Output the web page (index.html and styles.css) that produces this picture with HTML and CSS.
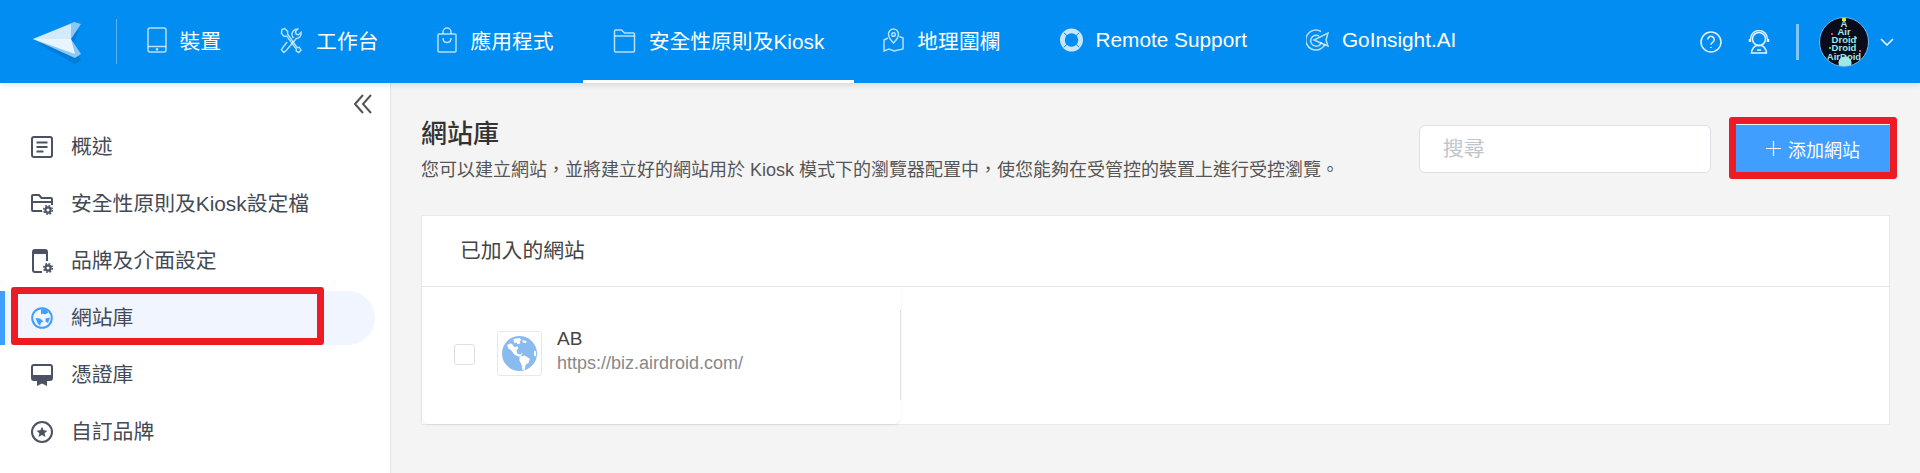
FILE: index.html
```html
<!DOCTYPE html>
<html lang="zh-Hant">
<head>
    <meta charset="UTF-8">
    <meta name="viewport" content="width=device-width, initial-scale=1.0">
    <title>網站庫</title>
    <link rel="stylesheet" href="styles.css">
</head>
<body>
    <header class="topbar">
        <svg class="logo" viewBox="0 0 50 44">
            <polygon points="6,24 46,10 40,24 48,40 42,44" fill="#0468b8" opacity="0.45"/>
            <polygon points="0,19 41,2 48,4 38,19 48,34 42,38" fill="#8cc8f6"/>
            <polygon points="0,19 38,4 38,19" fill="#d3eafb"/>
            <polygon points="0,19 38,19 42,34" fill="#e9f5fe"/>
        </svg>
        <span class="topbar-sep"></span>
        <nav class="tabs">
            <a class="tab">
                <svg class="tab-icon" width="20" height="26" viewBox="0 0 20 26"><rect x="1" y="1" width="18" height="24" rx="2"/><path d="M1 19.500h18"/><circle cx="10" cy="22.300" r="0.600"/></svg>
                <span>裝置</span>
            </a>
            <a class="tab">
                <svg class="tab-icon" width="23" height="27" viewBox="0 0 24 27"><path d="M2 2l3-1 3 3v3l10 14 2-.5 2 3-2.500 2.500-2.500-1.500v-2L7 9H4L1.500 6z"/><path d="M14 11l-1.500-3c-.5-3 2-6.500 6-6.500l-2.500 3 1 2.500 2.500.5 2.500-2.500c.5 3.500-2 6.500-5 6.500l-10 12-3 2.500L1.500 23l2-3 4-5"/></svg>
                <span>工作台</span>
            </a>
            <a class="tab">
                <svg class="tab-icon" width="20" height="26" viewBox="0 0 20 26"><path d="M2 7h16a1 1 0 0 1 1 1v16a1 1 0 0 1-1 1H2a1 1 0 0 1-1-1V8a1 1 0 0 1 1-1z"/><path d="M6 7V5a4 4 0 0 1 8 0v2"/><path d="M6 11c0 6 8 6 8 0"/></svg>
                <span>應用程式</span>
            </a>
            <a class="tab active">
                <svg class="tab-icon" width="23" height="26" viewBox="0 0 22 26"><path d="M1 4a1 1 0 0 1 1-1h6l3 3h9a1 1 0 0 1 1 1v17a1 1 0 0 1-1 1H2a1 1 0 0 1-1-1z"/><path d="M1 9h20"/></svg>
                <span>安全性原則及Kiosk</span>
            </a>
            <a class="tab">
                <svg class="tab-icon" width="21" height="26" viewBox="0 0 21 26"><path d="M10.500 16c-3-3-5-6-5-9a5 5 0 0 1 10 0c0 3-2 6-5 9z"/><circle cx="10.500" cy="7.500" r="1.800"/><path d="M5 11l-4 2v11l5-2 5 2 9-2V11l-3.500-1.500"/></svg>
                <span>地理圍欄</span>
            </a>
            <a class="tab">
                <svg class="tab-icon" width="23" height="26" viewBox="0 0 24 26"><circle class="ring" cx="12" cy="13" r="9.500"/><path class="ring-cut" d="M4 5.500l5 4.500M20 5.500l-5 4.500M4 20.500l5-4.500M20 20.500l-5-4.500"/></svg>
                <span>Remote Support</span>
            </a>
            <a class="tab">
                <svg class="tab-icon" width="23" height="24" viewBox="0 0 23 24"><path d="M15 3.500A10 10 0 1 0 19 16"/><path d="M13 8a5.500 5.500 0 1 0 2.500 6"/><path d="M8 12L22 5l-2 7 2 6-6-2.500z"/></svg>
                <span>GoInsight.AI</span>
            </a>
        </nav>
        <div class="topbar-right">
            <svg class="top-icon" width="22" height="22" viewBox="0 0 22 22"><circle cx="11" cy="11" r="10"/><path d="M7.800 8.500a3.200 3.200 0 1 1 4.800 2.800c-1 .6-1.600 1.200-1.600 2.500"/><path d="M11 16v1"/></svg>
            <svg class="top-icon" width="22" height="24" viewBox="0 0 22 24"><circle cx="11" cy="9" r="6.500"/><path d="M2.500 12V9a8.500 8.500 0 0 1 17 0v3"/><path d="M1.500 9v3M20.500 9v3"/><path d="M3.500 23c0-4 3-7 5-7.500h5c2 .5 5 3.500 5 7.500z"/><path d="M9 20h4"/></svg>
            <span class="right-sep"></span>
            <div class="avatar">
                <span class="avatar-star"></span>
                <span>A</span><span>Air</span><span>Droid</span><span>Droid</span><span>AirDoid</span>
            </div>
            <svg class="chevron" width="14" height="8" viewBox="0 0 14 8"><path d="M1 1l6 6 6-6"/></svg>
        </div>
    </header>

    <div class="main">
        <aside class="sidebar">
            <div class="collapse">
                <svg width="18" height="20" viewBox="0 0 18 20"><path d="M9 1L1 10l8 9M17 1l-8 9 8 9"/></svg>
            </div>
            <ul class="menu">
                <li class="menu-item">
                    <svg class="menu-icon" viewBox="0 0 22 22"><rect x="1" y="1" width="20" height="20" rx="2"/><path d="M5.500 6.500h11M5.500 11h11M5.500 15.500h7"/></svg>
                    <span>概述</span>
                </li>
                <li class="menu-item">
                    <svg class="menu-icon" viewBox="0 0 22 22"><path d="M12 18H2a1 1 0 0 1-1-1V3a1 1 0 0 1 1-1h6l2.500 3H20a1 1 0 0 1 1 1v6"/><path d="M1 9h20"/><circle class="cog-gap" cx="17" cy="17" r="6"/><circle class="cog-teeth" cx="17" cy="17" r="4.300"/><circle class="cog" cx="17" cy="17" r="2.600"/></svg>
                    <span>安全性原則及Kiosk設定檔</span>
                </li>
                <li class="menu-item">
                    <svg class="menu-icon menu-icon-tall" viewBox="0 0 22 24"><path d="M11 23H4a2 2 0 0 1-2-2V3a2 2 0 0 1 2-2h10a2 2 0 0 1 2 2v9"/><path class="fill-line" d="M2 2h14v3H2z"/><circle class="cog-gap" cx="17" cy="19" r="6"/><circle class="cog-teeth" cx="17" cy="19" r="4.300"/><circle class="cog" cx="17" cy="19" r="2.600"/></svg>
                    <span>品牌及介面設定</span>
                </li>
                <li class="menu-item active">
                    <svg class="menu-icon globe" viewBox="0 0 22 22"><circle cx="11" cy="11" r="9.800"/><path class="globe-land" d="M10 2.500c3-1 6 0 7.500 3L14 7.500l-2-1-2 1zM4.500 11l4.500.5 3.500 3-2.500 1-1 3.500-2.500-3zM14.500 11.500l4.500-1-2 5.500-2.500-1.500z"/></svg>
                    <span>網站庫</span>
                    <span class="mark mark-menu"></span>
                </li>
                <li class="menu-item">
                    <svg class="menu-icon" viewBox="0 0 22 22"><rect x="1" y="1" width="20" height="15" rx="2"/><path class="fill-line" d="M1 11h20v5H1z"/><path class="fill-line" d="M6 16h10v6l-5-2.500L6 22z"/></svg>
                    <span>憑證庫</span>
                </li>
                <li class="menu-item">
                    <svg class="menu-icon" viewBox="0 0 22 22"><circle cx="11" cy="11" r="10"/><path class="fill-line" d="M11 5.800l1.600 3.500 3.800.4-2.800 2.500.8 3.700-3.400-1.900-3.400 1.900.8-3.700-2.800-2.500 3.800-.4z"/></svg>
                    <span>自訂品牌</span>
                </li>
            </ul>
        </aside>

        <main class="content">
            <div class="page-head">
                <div>
                    <h1>網站庫</h1>
                    <p class="page-desc">您可以建立網站，並將建立好的網站用於 Kiosk 模式下的瀏覽器配置中，使您能夠在受管控的裝置上進行受控瀏覽。</p>
                </div>
                <div class="page-actions">
                    <div class="search">搜尋</div>
                    <button class="add-btn">
                        <svg width="15" height="15" viewBox="0 0 15 15"><path d="M7.500 0v15M0 7.500h15"/></svg>
                        <span>添加網站</span>
                        <span class="mark mark-btn"></span>
                    </button>
                </div>
            </div>

            <section class="card">
                <div class="card-head">已加入的網站</div>
                <div class="site-item">
                    <div class="site-row">
                        <span class="checkbox"></span>
                        <span class="site-icon">
                            <svg width="35" height="35" viewBox="0 0 34 34">
                                <circle cx="17" cy="17" r="17" fill="#8abbef"/>
                                <path fill="#fff" d="M11 3l6-1 2 2-2 1 1 2-3 1-1-2-2 1zM20 4l4 1-1 2-3-1zM5 9l3-2 2 1 2 3 3-1 1 2-2 2 1 3 3 1 2-2-1 3-3 1-4-2-3-4-3-2z"/>
                                <path fill="#fff" d="M17 20l5-1 5 3-1 4-3 2-1 5-2 0-1-5-2-4z"/>
                                <path fill="#fff" d="M31 14l2 1v5l-2-1z"/>
                            </svg>
                        </span>
                        <div class="site-text">
                            <div class="site-name">AB</div>
                            <div class="site-url">https://biz.airdroid.com/</div>
                        </div>
                    </div>
                </div>
            </section>
        </main>
    </div>
</body>
</html>
```

FILE: styles.css
```css
* {
    box-sizing: border-box;
}

html, body {
    height: 100%;
}

body {
    margin: 0;
    display: flex;
    flex-direction: column;
    overflow: hidden;
    font-family: "Liberation Sans", "Noto Sans CJK TC", sans-serif;
    background: #f4f4f4;
    color: #444a55;
}

/* Top bar */
.topbar {
    display: flex;
    align-items: center;
    height: 83px;
    padding-left: 33px;
    background: #018df2;
    color: #fff;
    box-shadow: 0 2px 6px rgba(0, 0, 0, 0.12);
    position: relative;
}

.logo {
    width: 50px;
    height: 44px;
    margin-top: 1px;
}

.topbar-sep {
    width: 1px;
    height: 45px;
    margin-left: 33px;
    background: rgba(255, 255, 255, 0.35);
}

.tabs {
    display: flex;
    height: 83px;
}

.tab {
    display: flex;
    align-items: center;
    gap: 13px;
    height: 83px;
    padding: 0 29.500px;
    font-size: 20.8px;
    white-space: nowrap;
    border-bottom: 3px solid transparent;
}

.tab.active {
    border-bottom-color: #fff;
}

.tab-icon, .top-icon {
    fill: none;
    stroke: rgba(255, 255, 255, 0.72);
    stroke-width: 1.5;
    flex-shrink: 0;
}

.tab-icon .ring {
    stroke: rgba(255, 255, 255, 0.78);
    stroke-width: 5;
}

.tab-icon .ring-cut {
    stroke: #018df2;
    stroke-width: 1;
}

.topbar-right {
    display: flex;
    align-items: center;
    margin-left: auto;
    padding-right: 26px;
}

.top-icon {
    stroke: rgba(255, 255, 255, 0.9);
    margin-right: 26px;
}

.right-sep {
    width: 3px;
    height: 36px;
    margin-right: 20px;
    background: rgba(255, 255, 255, 0.5);
}

.avatar {
    position: relative;
    display: flex;
    flex-direction: column;
    align-items: center;
    width: 50px;
    height: 50px;
    padding-top: 2px;
    overflow: hidden;
    border: 1px solid #6fb9f2;
    border-radius: 50%;
    background:
        radial-gradient(circle at 12px 16px, #d8455a 1px, transparent 1.500px),
        radial-gradient(circle at 36px 20px, #4fc36a 1px, transparent 1.500px),
        radial-gradient(circle at 10px 30px, #4fc36a 1px, transparent 1.500px),
        radial-gradient(circle at 40px 33px, #d8455a 1px, transparent 1.500px),
        radial-gradient(circle at 25px 45px, #9fe8e8 6px, transparent 7px),
        #0a0c1c;
    color: #9fe8e8;
    font-size: 9.500px;
    font-weight: bold;
    line-height: 8.300px;
}

.avatar-star {
    position: absolute;
    top: 0;
    left: 22px;
    width: 4px;
    height: 3px;
    background: #f2e24a;
}

.chevron {
    margin-left: 11px;
    fill: none;
    stroke: #fff;
    stroke-width: 1.5;
}

/* Sidebar */
.main {
    display: flex;
    flex: 1;
    min-height: 0;
}

.sidebar {
    width: 391px;
    flex-shrink: 0;
    background: #fff;
    border-right: 1px solid #e4e4e4;
}

.collapse {
    display: flex;
    justify-content: flex-end;
    height: 37px;
    padding: 11px 18px 0 0;
}

.collapse svg {
    fill: none;
    stroke: #555;
    stroke-width: 2;
}

.menu {
    display: flex;
    flex-direction: column;
    gap: 3px;
    margin: 0;
    padding: 0;
    list-style: none;
}

.menu-item {
    position: relative;
    display: flex;
    align-items: center;
    gap: 18px;
    width: 375px;
    height: 54px;
    padding-left: 26px;
    border-left: 5px solid transparent;
    border-radius: 0 27px 27px 0;
    font-size: 20.8px;
    white-space: nowrap;
}

.menu-item > span {
    margin-bottom: 5px;
}

.menu-item.active {
    background: #f0f5ff;
    border-left-color: #409eff;
}

.menu-icon {
    width: 22px;
    height: 22px;
    flex-shrink: 0;
    overflow: visible;
    fill: none;
    stroke: #4a5264;
    stroke-width: 2;
}

.menu-icon-tall {
    height: 24px;
}

.menu-icon .cog-gap {
    fill: #fff;
    stroke: none;
}

.menu-icon .cog-teeth {
    stroke-width: 1.500;
    stroke-dasharray: 1.800 1.580;
}

.menu-icon .cog {
    stroke-width: 2.200;
}

.menu-icon .fill-line {
    fill: #4a5264;
    stroke: none;
}

.menu-icon.globe {
    stroke: #409eff;
}

.globe-land {
    fill: #409eff;
    stroke: none;
}

/* Red annotation boxes */
.mark {
    position: absolute;
    border: 7px solid #ed1c24;
    border-radius: 3px;
}

.menu-item > .mark-menu {
    top: -4px;
    left: 6px;
    width: 313px;
    height: 58px;
    margin: 0;
}

.mark-btn {
    top: -8px;
    left: -7px;
    width: 168px;
    height: 62px;
}

/* Content */
.content {
    flex: 1;
    min-width: 0;
    padding: 35px 30px 0 30px;
}

.page-head {
    display: flex;
    justify-content: space-between;
    align-items: flex-start;
    height: 65px;
    margin-bottom: 32px;
}

h1 {
    margin: 1px 0 9px;
    font-size: 26px;
    font-weight: 500;
    line-height: 30px;
    color: #333;
}

.page-desc {
    margin: 0;
    font-size: 18px;
    line-height: 24px;
    color: #555;
    white-space: nowrap;
}

.page-actions {
    display: flex;
    gap: 25px;
    margin-top: 7px;
}

.search {
    width: 292px;
    height: 48px;
    padding-left: 23px;
    border: 1px solid #dcdfe6;
    border-radius: 6px;
    background: #fff;
    color: #c0c4cc;
    font-size: 20.8px;
    line-height: 46px;
}

.add-btn {
    position: relative;
    display: flex;
    align-items: center;
    justify-content: center;
    gap: 7px;
    width: 154px;
    height: 47px;
    padding: 0;
    border: none;
    background: #409eff;
    color: #fff;
    font-family: inherit;
    font-size: 18px;
}

.add-btn svg {
    stroke: #fff;
    stroke-width: 1.2;
}

.card {
    height: 210px;
    border: 1px solid #e8e8e8;
    background: #fff;
}

.card-head {
    height: 71px;
    padding-left: 38px;
    border-bottom: 1px solid #e8e8e8;
    font-size: 20.8px;
    line-height: 70px;
    color: #444;
}

.site-item {
    width: 479px;
    height: 137px;
    padding-top: 23px;
    border-radius: 0 0 8px 8px;
    box-shadow: 0 1px 2px rgba(0, 0, 0, 0.08);
}

.site-row {
    display: flex;
    align-items: center;
    height: 90px;
    padding-left: 32px;
    border-right: 1px solid #e0e0e0;
}

.checkbox {
    width: 21px;
    height: 21px;
    margin-bottom: 2px;
    border: 1px solid #dcdfe6;
    border-radius: 3px;
    background: #fff;
}

.site-icon {
    display: flex;
    align-items: center;
    justify-content: center;
    width: 45px;
    height: 45px;
    margin: 0 15px 3px 22px;
    border: 1px solid #e8e8e8;
    border-radius: 3px;
}

.site-text {
    margin-bottom: 8px;
    line-height: 24px;
}

.site-name {
    font-size: 19px;
    color: #444;
}

.site-url {
    font-size: 18px;
    color: #888;
}
```
